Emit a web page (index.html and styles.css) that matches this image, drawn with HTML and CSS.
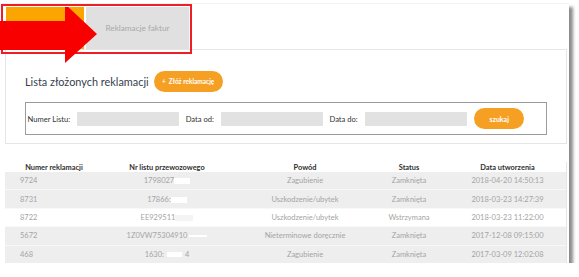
FILE: index.html
```html
<!DOCTYPE html>
<html>
<head>
    <title>Reklamacje</title>
    <link rel="stylesheet" href="styles.css">
</head>
<body>
    <div class="screen">
        <div class="tabs">
            <div class="tab tab-active"></div>
            <div class="tab">Reklamacje faktur</div>
        </div>

        <div class="panel">
            <div class="panel-head">
                <h2>Lista złożonych reklamacji</h2>
                <button class="btn btn-add">+&nbsp; Złóż reklamację</button>
            </div>
            <div class="filters">
                <label>Numer Listu:</label>
                <input type="text" class="field">
                <label>Data od:</label>
                <input type="text" class="field">
                <label>Data do:</label>
                <input type="text" class="field">
                <button class="btn btn-search">szukaj</button>
            </div>
        </div>

        <div class="list">
            <div class="list-head">
                <div class="col c1">Numer reklamacji</div>
                <div class="col c2">Nr listu przewozowego</div>
                <div class="col c3">Powód</div>
                <div class="col c4">Status</div>
                <div class="col c5">Data utworzenia</div>
            </div>
            <div class="row">
                <div class="col c1 num">9724</div>
                <div class="col c2">1798027<span class="hide hide-a"></span></div>
                <div class="col c3">Zagubienie</div>
                <div class="col c4">Zamknięta</div>
                <div class="col c5">2018-04-20 14:50:13</div>
            </div>
            <div class="row">
                <div class="col c1 num">8731</div>
                <div class="col c2">17866:<span class="hide hide-a"></span></div>
                <div class="col c3">Uszkodzenie/ubytek</div>
                <div class="col c4">Zamknięta</div>
                <div class="col c5">2018-03-23 14:27:39</div>
            </div>
            <div class="row row-white">
                <div class="col c1 num">8722</div>
                <div class="col c2">EE929511<span class="hide hide-blur"></span></div>
                <div class="col c3">Uszkodzenie/ubytek</div>
                <div class="col c4">Wstrzymana</div>
                <div class="col c5">2018-03-23 11:22:00</div>
            </div>
            <div class="row">
                <div class="col c1 num">5672</div>
                <div class="col c2">1Z0VW75304910<span class="hide hide-line"></span></div>
                <div class="col c3">Nieterminowe doręcznie</div>
                <div class="col c4">Zamknięta</div>
                <div class="col c5">2017-12-08 09:15:00</div>
            </div>
            <div class="row">
                <div class="col c1 num">468</div>
                <div class="col c2">1630:<span class="hide hide-b"></span>4</div>
                <div class="col c3">Zagubienie</div>
                <div class="col c4">Zamknięta</div>
                <div class="col c5">2017-03-09 12:02:08</div>
            </div>
        </div>

        <!-- adnotacja -->
        <div class="marker"></div>
        <svg class="arrow" width="98" height="62" viewBox="0 0 98 62">
            <path d="M0 14 H65 V-3 L97 27 L65 56 V43 H0 Z" fill="#f80000"/>
        </svg>
    </div>
</body>
</html>
```

FILE: styles.css
```css
* {
    margin: 0;
    padding: 0;
    box-sizing: border-box;
    font-family: 'Lato', sans-serif;
}

body {
    background: #fff;
}

.screen {
    position: relative;
    width: 569px;
    height: 260px;
    margin-top: 3px;
    background: #fff;
    border-top: 1px solid #f2f2f2;
    box-shadow: 4px 4px 3px rgba(0, 0, 0, 0.45);
}

/* Zakładki */
.tabs {
    display: flex;
    gap: 2px;
    padding: 3px 0 0 6px;
}

.tab {
    height: 42px;
    width: 103px;
    background: #e0e0e0;
    color: #a9a9a9;
    font-size: 8.2px;
    display: flex;
    align-items: center;
    justify-content: center;
}

.tab-active {
    width: 78px;
    background: #fba500;
}

/* Panel */
.panel {
    margin: 0 2px 0 5px;
    border: 1px solid #e6e6e6;
    height: 95px;
    padding: 21px 19px 0 19px;
}

.panel-head {
    display: flex;
    align-items: center;
    gap: 5px;
}

.panel-head h2 {
    font-size: 10.9px;
    font-weight: 400;
    color: #36404d;
}

.btn {
    border: none;
    background: #f6a023;
    color: #fff;
    font-weight: 700;
    cursor: pointer;
}

.btn-add {
    width: 69px;
    height: 21px;
    border-radius: 11px;
    font-size: 6.5px;
}

.filters {
    margin-top: 10px;
    height: 33px;
    width: 522px;
    border: 1.5px solid #9c9c9c;
    display: flex;
    align-items: center;
    padding-left: 1.5px;
}

.filters label {
    font-size: 7.6px;
    color: #333;
    margin-right: 7px;
}

.field {
    width: 102px;
    height: 14px;
    border: none;
    background: #e2e2e2;
    margin-right: 6.5px;
}

.btn-search {
    width: 50px;
    height: 21px;
    border-radius: 11px;
    font-size: 7px;
    margin-left: 1px;
}

/* Lista */
.list {
    margin: 18px 2px 0 5px;
    border-right: 1px solid #e6e6e6;
}

.list-head,
.row {
    display: grid;
    grid-template-columns: 98px 128px 148px 60px 1fr;
    align-items: center;
}

.list-head {
    height: 10px;
    font-size: 7.4px;
    font-weight: 700;
    color: #2f2f2f;
}

.row {
    height: 18.4px;
    background: #eeeeee;
    border-bottom: 1px solid #f8f8f8;
    font-size: 7.5px;
    color: #a4a4a4;
}

.row-white {
    background: #fff;
}

.col {
    text-align: center;
    white-space: nowrap;
}

.c5 {
    padding-left: 10px;
}

.num {
    text-align: left;
    padding-left: 15px;
}

.hide {
    display: inline-block;
    vertical-align: middle;
    background: #fff;
}

.hide-a {
    width: 16px;
    height: 6px;
}

.hide-blur {
    width: 18px;
    height: 6px;
    background: #f4f4f4;
}

.hide-line {
    width: 18px;
    height: 2px;
    margin-left: 2px;
}

.hide-b {
    width: 15px;
    height: 5px;
    margin: 0 3px;
}

/* Adnotacja */
.marker {
    position: absolute;
    left: 1px;
    top: 0;
    width: 191px;
    height: 50px;
    border: 2px solid #ee1d26;
}

.arrow {
    position: absolute;
    left: 0;
    top: 3px;
}
```
